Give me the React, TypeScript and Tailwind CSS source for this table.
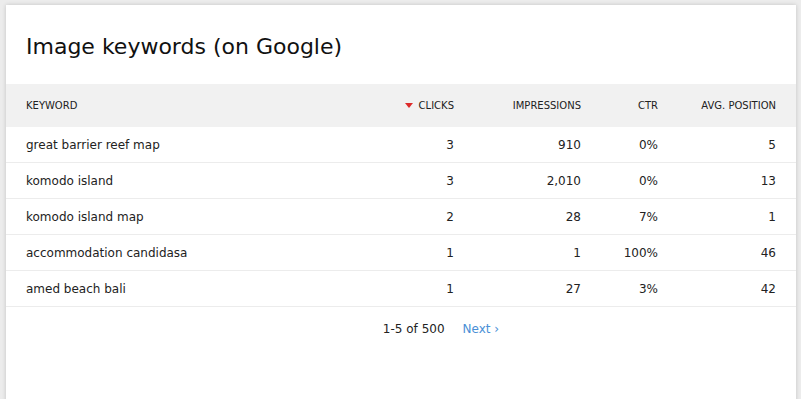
import React from "react";

const rows = [
  { k: "great barrier reef map", c: "3", i: "910", ctr: "0%", p: "5" },
  { k: "komodo island", c: "3", i: "2,010", ctr: "0%", p: "13" },
  { k: "komodo island map", c: "2", i: "28", ctr: "7%", p: "1" },
  { k: "accommodation candidasa", c: "1", i: "1", ctr: "100%", p: "46" },
  { k: "amed beach bali", c: "1", i: "27", ctr: "3%", p: "42" },
];

export default function App() {
  return (
    <div
      className="w-[801px] h-[399px] overflow-hidden bg-[#ececec] pt-[5px] pl-[6px] pr-[5px]"
      style={{ fontFamily: '"DejaVu Sans", sans-serif' }}
    >
      <div className="bg-white h-[420px] shadow-[0_0_4px_rgba(0,0,0,0.18)] text-[#222]">
        <div className="h-[79px] pl-[20px] pt-[27px] text-[22px] leading-[30px] text-[#111]">
          Image keywords (on Google)
        </div>
        <div className="grid grid-cols-[381px_79px_127px_77px_126px]">
          <div className="h-[43px] bg-[#f1f1f1] flex items-center pl-[20px] text-[10px] text-[#222]">
            KEYWORD
          </div>
          <div className="h-[43px] bg-[#f1f1f1] flex items-center justify-end pr-[12px] text-[10px] text-[#222]">
            <svg width="8" height="5" viewBox="0 0 8 5" className="mr-[6px]">
              <path d="M0 0 L8 0 L4 5 Z" fill="#dd2a2a" />
            </svg>
            CLICKS
          </div>
          <div className="h-[43px] bg-[#f1f1f1] flex items-center justify-end pr-[12px] text-[10px] text-[#222]">
            IMPRESSIONS
          </div>
          <div className="h-[43px] bg-[#f1f1f1] flex items-center justify-end pr-[12px] text-[10px] text-[#222]">
            CTR
          </div>
          <div className="h-[43px] bg-[#f1f1f1] flex items-center justify-end pr-[20px] text-[10px] text-[#222]">
            AVG. POSITION
          </div>
          {rows.map((r) => (
            <React.Fragment key={r.k}>
              <div className="h-[36px] border-b border-[#ececec] flex items-center pl-[20px] text-[12px]">
                {r.k}
              </div>
              <div className="h-[36px] border-b border-[#ececec] flex items-center justify-end pr-[12px] text-[12px]">
                {r.c}
              </div>
              <div className="h-[36px] border-b border-[#ececec] flex items-center justify-end pr-[12px] text-[12px]">
                {r.i}
              </div>
              <div className="h-[36px] border-b border-[#ececec] flex items-center justify-end pr-[12px] text-[12px]">
                {r.ctr}
              </div>
              <div className="h-[36px] border-b border-[#ececec] flex items-center justify-end pr-[20px] text-[12px]">
                {r.p}
              </div>
            </React.Fragment>
          ))}
        </div>
        <div className="flex justify-center items-center gap-[18px] h-[44px] pl-[80px] text-[12px]">
          <span className="text-[#222]">1-5 of 500</span>
          <span className="text-[#4a8fd6]">Next ›</span>
        </div>
      </div>
    </div>
  );
}
